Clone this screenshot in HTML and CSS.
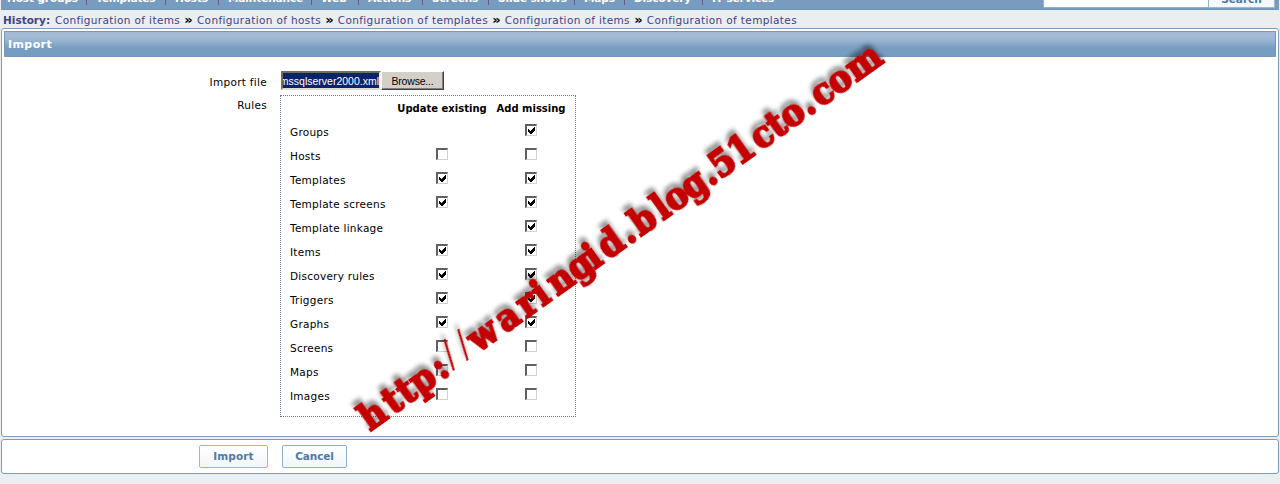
FILE: index.html
```html
<!DOCTYPE html>
<html lang="en">
<head>
<meta charset="utf-8">
<title>Configuration of templates: Import</title>
<link rel="stylesheet" href="styles.css">
</head>
<body>
<header class="topbar">
<nav class="menu"><a class="w-a">Host groups</a><a class="w-b">Templates</a><a class="w-c">Hosts</a><a class="w-d">Maintenance</a><a class="w-e">Web</a><a class="w-f">Actions</a><a class="w-f">Screens</a><a class="w-g">Slide shows</a><a class="w-h">Maps</a><a class="w-i">Discovery</a><a class="last">IT services</a></nav>
<div class="search"><span class="search-field"></span><span class="search-button">Search</span></div>
</header>
<div class="history"><b>History:</b><a>Configuration of items</a><i>»</i><a>Configuration of hosts</a><i>»</i><a>Configuration of templates</a><i>»</i><a>Configuration of items</a><i>»</i><a>Configuration of templates</a></div>
<main class="panel">
<h1 class="title">Import</h1>
<div class="row file-row"><label class="label">Import file</label><div class="file"><span class="file-name"><span>mssqlserver2000.xml</span></span><span class="browse">Browse...</span></div></div>
<div class="row"><label class="label rules-label">Rules</label>
<div class="rules">
<div class="rule head"><span></span><b class="update">Update existing</b><b class="add">Add missing</b></div>
<div class="rule"><span>Groups</span><span></span><span class="box on"></span></div>
<div class="rule"><span>Hosts</span><span class="box"></span><span class="box"></span></div>
<div class="rule"><span>Templates</span><span class="box on"></span><span class="box on"></span></div>
<div class="rule"><span>Template screens</span><span class="box on"></span><span class="box on"></span></div>
<div class="rule"><span>Template linkage</span><span></span><span class="box on"></span></div>
<div class="rule"><span>Items</span><span class="box on"></span><span class="box on"></span></div>
<div class="rule"><span>Discovery rules</span><span class="box on"></span><span class="box on"></span></div>
<div class="rule"><span>Triggers</span><span class="box on"></span><span class="box on"></span></div>
<div class="rule"><span>Graphs</span><span class="box on"></span><span class="box on"></span></div>
<div class="rule"><span>Screens</span><span class="box"></span><span class="box"></span></div>
<div class="rule"><span>Maps</span><span class="box"></span><span class="box"></span></div>
<div class="rule"><span>Images</span><span class="box"></span><span class="box"></span></div>
</div></div>
</main>
<footer class="actions"><span class="button primary">Import</span><span class="button cancel">Cancel</span></footer>
<svg class="watermark" viewBox="0 0 1280 484">
<g transform="translate(371 431) rotate(-35.6)">
<text y="0" x="11 35 52 72 93 108 125 147 177 201 218 242 266 282 304 324 344 366 384 406 424 442 465 490 508 527 545 564 585 615">http:<tspan class="thin" dy="-1 0">//</tspan>waringid.blog.51cto.com</text>
</g>
</svg>
<script src="checks.js"></script>
</body>
</html>
```
FILE: checks.js
```js
// Adds the tick mark to every selected checkbox.
document.querySelectorAll('.box.on').forEach(function (box) {
  box.innerHTML = '<svg viewBox="0 0 12 12" shape-rendering="crispEdges"><path d="M3 5v3l2 2h1l4-4V3L5.5 7z"/></svg>';
});
```
FILE: styles.css
```css
* { box-sizing: border-box; }
body { margin: 0; height: 484px; overflow: hidden; background: #eaeef1; font: 10.5px/14px "DejaVu Sans", sans-serif; color: #000; position: relative; }
.topbar { height: 10px; margin: 0 1px; display: flex; align-items: flex-end; justify-content: space-between; background: #779cc0; border-bottom: 1px solid #7394b3; overflow: hidden; }
.menu { display: flex; padding-left: 6px; margin-bottom: 4px; color: #fff; font-weight: bold; line-height: 14px; letter-spacing: -.1px; white-space: nowrap; }
.menu a { border-right: 1px solid #6a5a96; }
.menu .last { border: 0; }
.menu a + a { padding-left: 9px; }
.w-a { width: 80px; } .w-b { width: 79px; } .w-c { width: 53px; } .w-d { width: 93px; } .w-e { width: 47px; } .w-f { width: 64px; } .w-f + .w-f { width: 66px; } .w-g { width: 86px; } .w-h { width: 50px; } .w-i { width: 78px; }
.search { display: flex; margin: 0 4px 1px 0; height: 20px; }
.search-field { width: 166px; background: #fff; border: 1px solid #92b0cd; }
.search-button { width: 66px; background: #f5f8fc; border: 1px solid #9db4d3; border-left: 0; color: #4d7aa6; font-weight: bold; text-align: center; line-height: 13px; padding-top: 4px; }
.history { height: 18px; padding-left: 3px; display: flex; align-items: center; color: #434189; white-space: nowrap; padding-top: 1px; letter-spacing: .36px; }
.history b { width: 52px; letter-spacing: 0; }
.history i { font-style: normal; font-weight: bold; font-size: 13px; color: #000; width: 16.8px; text-align: center; letter-spacing: 0; }
.panel { margin: 0 1px; height: 409px; background: #fff; border: 1px solid #7b9cbc; border-radius: 3px; padding: 2px; }
.title { margin: 0 0 14px; height: 26px; padding-left: 3px; font-size: 11px; line-height: 25px; color: #fff; border: 1px solid #7895b4; border-bottom-color: #739abd; border-radius: 1px; background: linear-gradient(#a5bbd5 0%, #9fb9d3 28%, #779ec2 65%, #779cc0 100%); letter-spacing: .4px; }
.row { display: flex; padding-left: 3px; }
.file-row { height: 24px; }
.label { width: 260px; margin-right: 13px; text-align: right; padding-top: 4px; letter-spacing: .3px; }
.rules-label { padding-top: 3px; }
.file { display: flex; height: 19px; margin-left: 1px; font: 10.5px/13px "Liberation Sans", sans-serif; }
.file-name { width: 100px; background: #0a246a; color: #fff; border: 2px solid; border-color: #716f64 #f4f2ec #e0ddd5 #716f64; display: flex; justify-content: flex-end; overflow: hidden; white-space: nowrap; line-height: 16px; }
.browse { width: 63px; border: 1px solid; border-color: #fff #404040 #404040 #fff; background: #d4d0c8; box-shadow: inset -1px -1px #808080; text-align: center; line-height: 18px; letter-spacing: -.2px; }
.rules { width: 296px; height: 322px; border: 1px dotted #6372b4; padding: 0 0 0 9px; }
.rule { display: grid; grid-template-columns: 107px 90px 88px; height: 24px; line-height: 25px; letter-spacing: .25px; }
.head { line-height: 25px; letter-spacing: 0; white-space: nowrap; font-size: 10px; }
.update { text-align: center; }
.add { text-align: center; }
.box { width: 12px; height: 12px; margin-top: 4px; justify-self: center; background: #fff; border: 2px solid; border-color: #606060 #d4d0c8 #d4d0c8 #606060; border-right-width: 1px; border-bottom-width: 1px; position: relative; }
.box svg { display: block; width: 12px; height: 12px; margin: -2px; }
.actions { margin: 2px 1px 0; height: 35px; background: #fff; border: 1px solid #7b9cbc; border-radius: 3px; display: flex; gap: 14px; padding: 5px 0 0 197px; }
.button { height: 23px; border: 1px solid #93aecb; border-radius: 2px; background: linear-gradient(#fff, #f1f6fa); color: #4d7aa6; font-weight: bold; text-align: center; line-height: 21px; letter-spacing: .1px; }
.primary { width: 69px; border-color: #f8a933; }
.cancel { width: 65px; letter-spacing: -.1px; }
.watermark { position: absolute; inset: 0; width: 1280px; height: 484px; pointer-events: none; }
.watermark text { font: bold 37.5px "DejaVu Serif Condensed", "DejaVu Serif", serif; fill: #c40000; stroke: #c40000; stroke-width: 2px; text-anchor: middle; filter: drop-shadow(1px -5px 2px rgba(0, 0, 0, .42)); }
.watermark .thin { font-weight: normal; font-family: "Liberation Serif", serif; font-size: 46px; stroke: none; }
```
